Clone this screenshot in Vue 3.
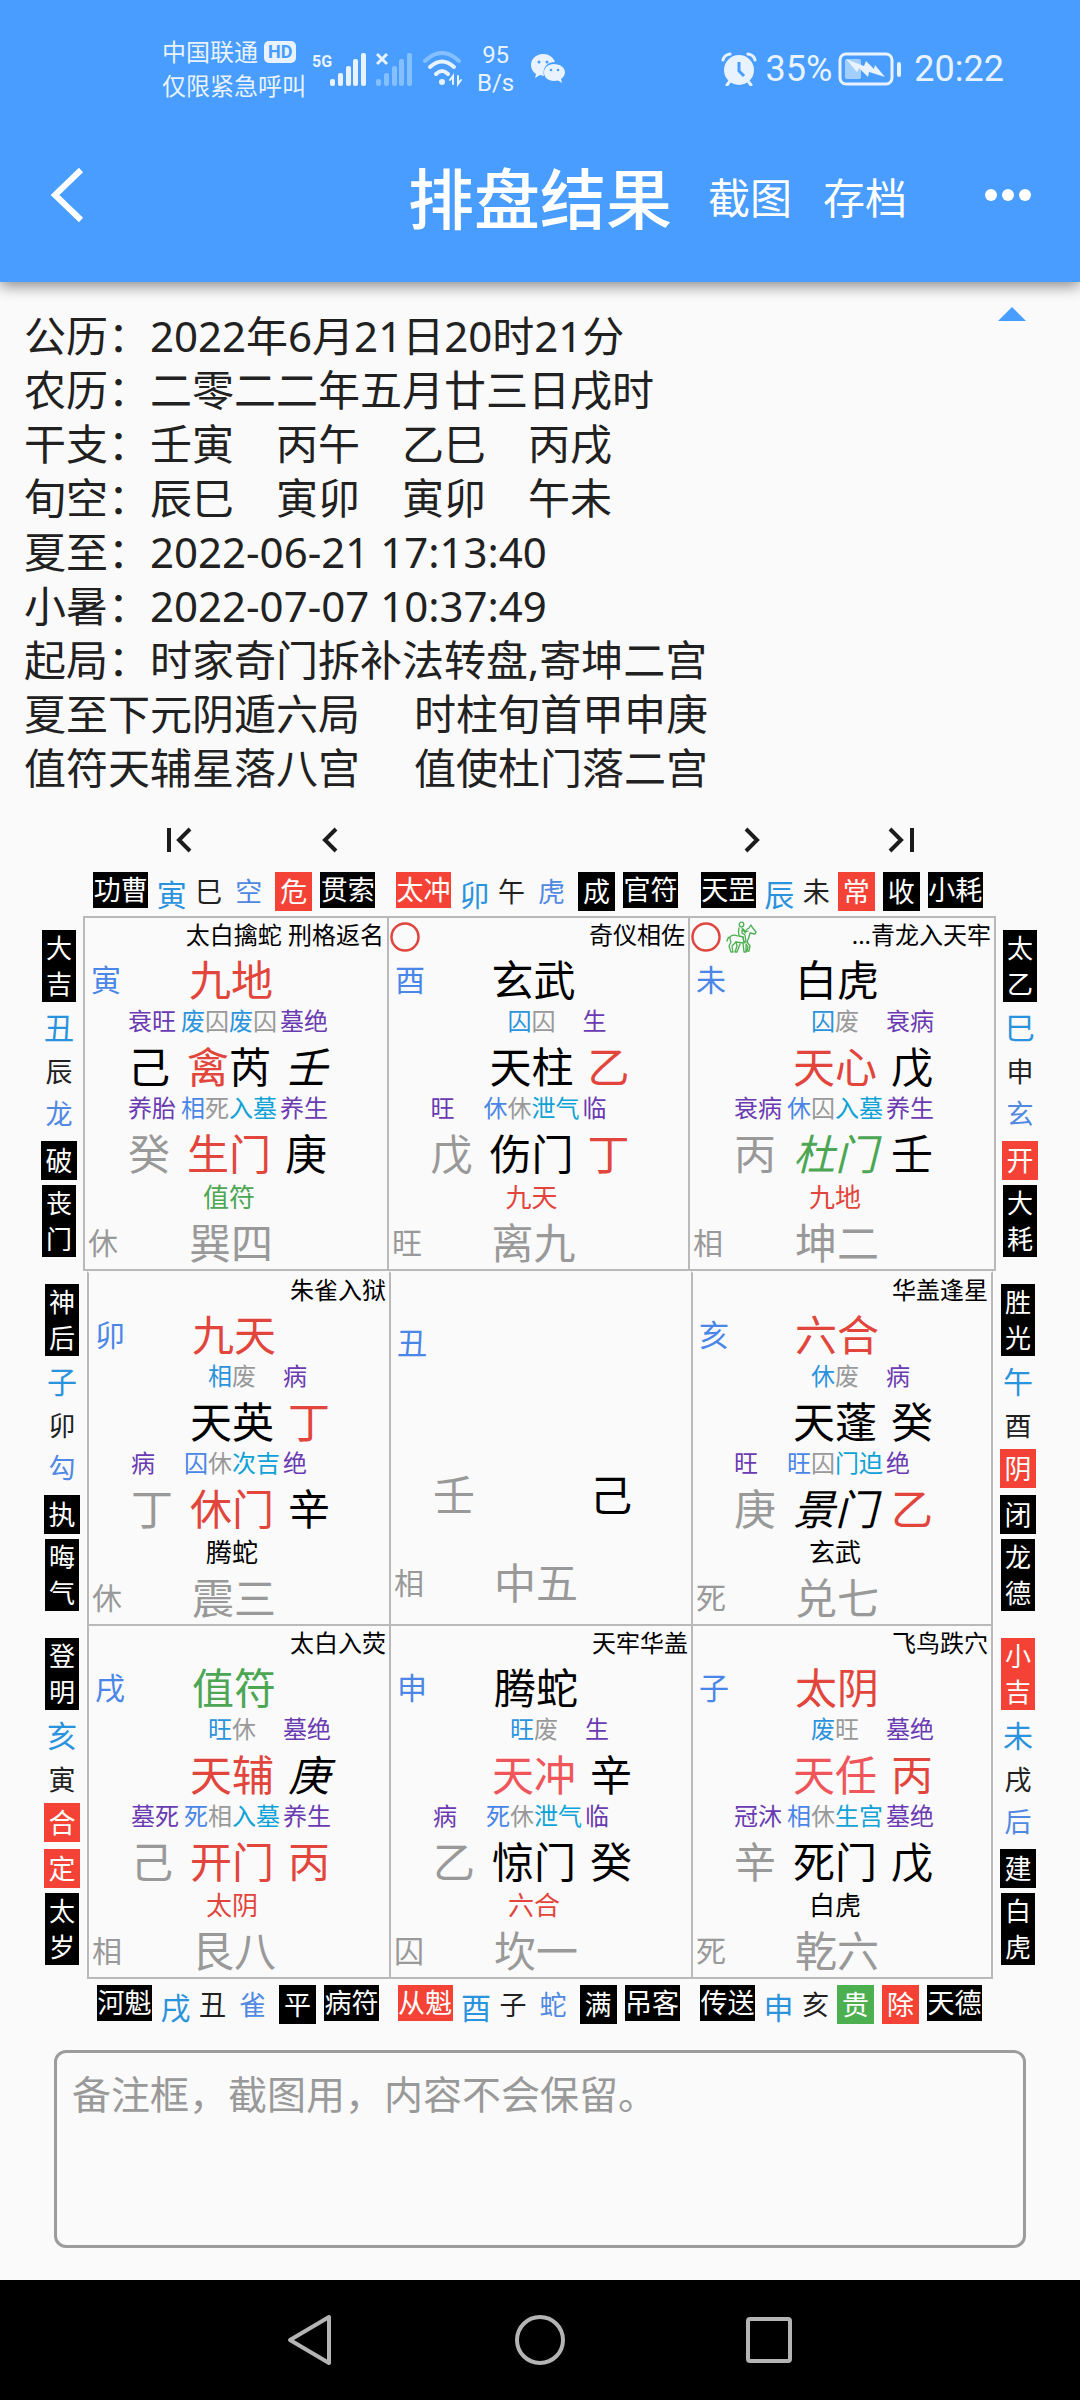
<script setup>
import { ref } from 'vue'

const note = ref('')

const infoLines = [
  ['公历：2022年6月21日20时21分'],
  ['农历：二零二二年五月廿三日戌时'],
  ['干支：壬寅　丙午　乙巳　丙戌'],
  ['旬空：辰巳　寅卯　寅卯　午未'],
  ['夏至：2022-06-21 17:13:40'],
  ['小暑：2022-07-07 10:37:49'],
  ['起局：时家奇门拆补法转盘,寄坤二宫'],
  ['夏至下元阴遁六局', '时柱旬首甲申庚'],
  ['值符天辅星落八宫', '值使杜门落二宫']
]

// Each strip: general, monthly branch, hour branch, spirit, officer, year star.
// A "|red", "|black" or "|green" suffix paints the item as a filled box.
const topStrips = [
  ['功曹|black', '寅', '巳', '空', '危|red', '贯索|black'],
  ['太冲|red', '卯', '午', '虎', '成|black', '官符|black'],
  ['天罡|black', '辰', '未', '常|red', '收|black', '小耗|black']
]
const bottomStrips = [
  ['河魁|black', '戌', '丑', '雀', '平|black', '病符|black'],
  ['从魁|red', '酉', '子', '蛇', '满|black', '吊客|black'],
  ['传送|black', '申', '亥', '贵|green', '除|red', '天德|black']
]

// Coloured runs are written "text|tone", separated by spaces.
const rows = [
  {
    left: ['大吉|black', '丑', '辰', '龙', '破|black', '丧门|black'],
    right: ['太乙|black', '巳', '申', '玄', '开|red', '大耗|black'],
    cells: [
      { tag: '太白擒蛇 刑格返名', branch: '寅', title: '九地|t-red', s1: ['衰旺', '废|t-sky 囚|t-grey 废|t-sky 囚|t-grey', '墓绝'], star: ['己|t-ink', '禽|t-red 芮|t-ink', '壬|t-ink slant'], s2: ['养胎', '相|t-blue 死|t-grey 入墓|t-cyan', '养生'], door: ['癸|t-grey', '生门|t-red', '庚|t-ink'], god: '值符|t-green', force: '休', palace: '巽四' },
      { empty: true, tag: '奇仪相佐', branch: '酉', title: '玄武|t-ink', s1: ['', '囚|t-sky 囚|t-grey', '生'], star: ['', '天柱|t-ink', '乙|t-red'], s2: ['旺', '休|t-blue 休|t-grey 泄气|t-cyan', '临'], door: ['戊|t-grey', '伤门|t-ink', '丁|t-red'], god: '九天|t-red', force: '旺', palace: '离九' },
      { empty: true, horse: true, tag: '...青龙入天牢', branch: '未', title: '白虎|t-ink', s1: ['', '囚|t-sky 废|t-grey', '衰病'], star: ['', '天心|t-red', '戊|t-ink'], s2: ['衰病', '休|t-blue 囚|t-grey 入墓|t-cyan', '养生'], door: ['丙|t-grey', '杜门|t-green slant', '壬|t-ink'], god: '九地|t-red', force: '相', palace: '坤二' }
    ]
  },
  {
    left: ['神后|black', '子', '卯', '勾', '执|black', '晦气|black'],
    right: ['胜光|black', '午', '酉', '阴|red', '闭|black', '龙德|black'],
    cells: [
      { tag: '朱雀入狱', branch: '卯', title: '九天|t-red', s1: ['', '相|t-sky 废|t-grey', '病'], star: ['', '天英|t-ink', '丁|t-red'], s2: ['病', '囚|t-blue 休|t-grey 次吉|t-cyan', '绝'], door: ['丁|t-grey', '休门|t-red', '辛|t-ink'], god: '腾蛇|t-ink', force: '休', palace: '震三' },
      { middle: true, tag: '', branch: '丑', title: '', door: ['壬|t-grey', '', '己|t-ink'], force: '相', palace: '中五' },
      { tag: '华盖逢星', branch: '亥', title: '六合|t-red', s1: ['', '休|t-sky 废|t-grey', '病'], star: ['', '天蓬|t-ink', '癸|t-ink'], s2: ['旺', '旺|t-blue 囚|t-grey 门迫|t-cyan', '绝'], door: ['庚|t-grey', '景门|t-ink slant', '乙|t-red'], god: '玄武|t-ink', force: '死', palace: '兑七' }
    ]
  },
  {
    left: ['登明|black', '亥', '寅', '合|red', '定|red', '太岁|black'],
    right: ['小吉|red', '未', '戌', '后', '建|black', '白虎|black'],
    cells: [
      { tag: '太白入荧', branch: '戌', title: '值符|t-green', s1: ['', '旺|t-sky 休|t-grey', '墓绝'], star: ['', '天辅|t-red', '庚|t-ink slant'], s2: ['墓死', '死|t-blue 相|t-grey 入墓|t-cyan', '养生'], door: ['己|t-grey', '开门|t-red', '丙|t-red'], god: '太阴|t-red', force: '相', palace: '艮八' },
      { tag: '天牢华盖', branch: '申', title: '腾蛇|t-ink', s1: ['', '旺|t-sky 废|t-grey', '生'], star: ['', '天冲|t-rose', '辛|t-ink'], s2: ['病', '死|t-blue 休|t-grey 泄气|t-cyan', '临'], door: ['乙|t-grey', '惊门|t-ink', '癸|t-ink'], god: '六合|t-red', force: '囚', palace: '坎一' },
      { tag: '飞鸟跌穴', branch: '子', title: '太阴|t-red', s1: ['', '废|t-sky 旺|t-grey', '墓绝'], star: ['', '天任|t-rose', '丙|t-red'], s2: ['冠沐', '相|t-blue 休|t-grey 生宫|t-cyan', '墓绝'], door: ['辛|t-grey', '死门|t-ink', '戊|t-ink'], god: '白虎|t-ink', force: '死', palace: '乾六' }
    ]
  }
]

const runs = (s) =>
  (s.match(/[^\s|]+\|t-[a-z]+( slant)?/g) || []).map((r) => {
    const [text, tone] = r.split('|')
    return { text, tone }
  })
const label = (s) => s.split('|')[0]
const fill = (s) => (s.includes('|') ? ['fill', 'fill-' + s.split('|')[1]] : [])
</script>

<template>
  <div class="screen">
    <header class="head">
      <div class="status">
        <div class="carrier">
          <span class="line">中国联通<b class="hd">HD</b></span>
          <span class="line">仅限紧急呼叫</span>
        </div>
        <svg class="signal" width="54" height="36" viewBox="0 0 54 36">
          <text x="0" y="16" class="gen">5G</text>
          <g fill="#e8f3ff"><rect x="18" y="28" width="5" height="7" rx="2" /><rect x="26" y="22" width="5" height="13" rx="2" /><rect x="34" y="15" width="5" height="20" rx="2" /><rect x="41" y="8" width="5" height="27" rx="2" /><rect x="49" y="2" width="5" height="33" rx="2" /></g>
        </svg>
        <svg class="signal2" width="36" height="36" viewBox="0 0 36 36">
          <g fill="#84bfff"><rect x="0" y="28" width="5" height="7" rx="2" /><rect x="8" y="22" width="5" height="13" rx="2" /><rect x="16" y="15" width="5" height="20" rx="2" /><rect x="23" y="8" width="5" height="27" rx="2" /><rect x="31" y="2" width="5" height="33" rx="2" /></g>
          <path d="M1 3l10 10M11 3L1 13" stroke="#e8f3ff" stroke-width="3" />
        </svg>
        <svg class="wifi" width="40" height="36" viewBox="0 0 40 36" fill="none" stroke-width="4" stroke-linecap="round">
          <path d="M2 10Q19-6 36 10" stroke="#84bfff" />
          <path d="M7 16Q19 5 31 16M13 23Q19 17 25 23" stroke="#e8f3ff" />
          <circle cx="19" cy="31" r="3" fill="#e8f3ff" />
          <path d="M30 33V25l-3 4M35 25v8l3-4" stroke="#e8f3ff" stroke-width="2" />
        </svg>
        <div class="rate"><span>95</span><span>B/s</span></div>
        <svg class="wechat" width="34" height="30" viewBox="0 0 34 30">
          <path d="M12 0C5 0 0 5 0 11c0 4 2 7 5 9l-1 4 5-3 4 1C11 14 16 8 24 8 22 3 18 0 12 0z" fill="#e8f3ff" />
          <path d="M23 10c-6 0-10 4-10 8.500s4 8.500 10 8.500l4-.5 4 2.500-1-4c2-1.500 4-4 4-6.500 0-5-5-8.500-11-8.500z" fill="#e8f3ff" />
          <g fill="#489dff"><circle cx="8" cy="8" r="1.500" /><circle cx="16" cy="8" r="1.500" /><circle cx="20" cy="16" r="1.300" /><circle cx="27" cy="16" r="1.300" /></g>
        </svg>
        <div class="system">
          <svg width="36" height="34" viewBox="0 0 36 34">
            <circle cx="18" cy="18" r="15" fill="#e8f3ff" />
            <path d="M2 8q1-5 7-6M34 8q-1-5-7-6M9 29l-3 4M27 29l3 4" stroke="#e8f3ff" stroke-width="3" fill="none" stroke-linecap="round" />
            <path d="M18 10v9l5 5" stroke="#489dff" stroke-width="3" fill="none" />
          </svg>
          <span class="pct">35%</span>
          <svg width="64" height="34" viewBox="0 0 64 34">
            <rect x="2" y="2" width="52" height="30" rx="6" fill="none" stroke="#e8f3ff" stroke-width="3" />
            <rect x="7" y="7" width="16" height="20" rx="2" fill="#a3cfff" />
            <path d="M8 7l18 7 2-5 8 8 1-4 10 12-16-5-1 5-9-9-2 4z" fill="#e8f3ff" />
            <rect x="59" y="10" width="4" height="15" rx="2" fill="#e8f3ff" />
          </svg>
          <span class="clock">20:22</span>
        </div>
      </div>
      <div class="appbar">
        <button class="icon-btn back" type="button" aria-label="返回">
          <svg width="36" height="56" viewBox="0 0 36 56"><path d="M32 3L6 28l26 25" fill="none" stroke="#fff" stroke-width="6" /></svg>
        </button>
        <h1>排盘结果</h1>
        <div class="actions">
          <button class="action" type="button">截图</button>
          <button class="action" type="button">存档</button>
          <button class="icon-btn more" type="button" aria-label="更多">
            <svg width="46" height="12" viewBox="0 0 46 12" fill="#fff"><circle cx="6" cy="6" r="6" /><circle cx="23" cy="6" r="6" /><circle cx="40" cy="6" r="6" /></svg>
          </button>
        </div>
      </div>
    </header>

    <main>
      <section class="info">
        <div class="lines">
          <p v-for="(l, i) in infoLines" :key="i"><span v-for="part in l" :key="part">{{ part }}</span></p>
        </div>
        <button class="icon-btn fold" type="button" aria-label="收起">
          <svg width="28" height="14" viewBox="0 0 28 14"><path d="M14 0l14 14H0z" fill="#489dff" /></svg>
        </button>
      </section>

      <nav class="steps">
        <div class="pair">
          <button class="icon-btn" type="button" aria-label="最前"><svg width="32" height="32" viewBox="0 0 32 32"><path d="M5 4v24M26 5L15 16l11 11" /></svg></button>
          <button class="icon-btn" type="button" aria-label="上一个"><svg width="32" height="32" viewBox="0 0 32 32"><path d="M22 5L11 16l11 11" /></svg></button>
        </div>
        <div class="pair">
          <button class="icon-btn" type="button" aria-label="下一个"><svg width="32" height="32" viewBox="0 0 32 32"><path d="M10 5l11 11-11 11" /></svg></button>
          <button class="icon-btn" type="button" aria-label="最后"><svg width="32" height="32" viewBox="0 0 32 32"><path d="M4 5l11 11L4 27M26 4v24" /></svg></button>
        </div>
      </nav>

      <section class="board">
        <div class="strips">
          <div v-for="(s, i) in topStrips" :key="i" class="strip">
            <span v-for="(x, k) in s" :key="k" :class="['slot', 'k' + k, ...fill(x)]">{{ label(x) }}</span>
          </div>
        </div>

        <div v-for="(row, r) in rows" :key="r" :class="['row', 'row' + r]">
          <div class="side">
            <span v-for="(x, k) in row.left" :key="k" :class="['slot', 'k' + k, ...fill(x)]">{{ label(x) }}</span>
          </div>
          <div class="cells">
            <article v-for="(c, i) in row.cells" :key="i" class="cell">
              <div class="tags">
                <svg v-if="c.empty" width="30" height="30" viewBox="0 0 30 30"><circle cx="15" cy="15" r="13.500" fill="none" stroke="#df463f" stroke-width="2.500" /></svg>
                <svg v-if="c.horse" class="horse" width="32" height="32" viewBox="0 0 32 32" fill="none" stroke="#4caf50" stroke-width="1.300" stroke-linejoin="round" stroke-linecap="round">
                  <circle cx="16.500" cy="3.500" r="2.300" />
                  <path d="M14 7q-1 4 0 8l4 1 1 5 2 0-1-7-3-2v-3l3 2 3-1M17 7l3 3" />
                  <path d="M13 15q-6-2-8 1-2 0-3 4M5 16q0 4 1 5l-2 4 2 6h2l-1-6 4-4 7 1 1 9h2l0-8 2 3-1 4h2l1-5-3-4q2-4 3-9l5 1 1-2-4-5-1-2-2 3q-3 1-4 5" />
                  <path d="M11 21l1 4-2 6h2l3-8M18 16l1 6" />
                </svg>
                <span class="tag">{{ c.tag }}</span>
              </div>
              <div :class="['body', { middle: c.middle }]">
                <span class="branch">{{ c.branch }}</span>
                <span class="big mid wide"><i v-for="t in runs(c.title)" :key="t.text" :class="t.tone">{{ t.text }}</i></span>
                <template v-if="!c.middle">
                  <span class="small l">{{ c.s1[0] }}</span>
                  <span class="small mid"><i v-for="(t, n) in runs(c.s1[1])" :key="n" :class="t.tone">{{ t.text }}</i></span>
                  <span class="small r">{{ c.s1[2] }}</span>
                  <span class="big l"><i v-for="t in runs(c.star[0])" :key="t.text" :class="t.tone">{{ t.text }}</i></span>
                  <span class="big mid"><i v-for="t in runs(c.star[1])" :key="t.text" :class="t.tone">{{ t.text }}</i></span>
                  <span class="big r"><i v-for="t in runs(c.star[2])" :key="t.text" :class="t.tone">{{ t.text }}</i></span>
                  <span class="small l">{{ c.s2[0] }}</span>
                  <span class="small mid"><i v-for="(t, n) in runs(c.s2[1])" :key="n" :class="t.tone">{{ t.text }}</i></span>
                  <span class="small r">{{ c.s2[2] }}</span>
                </template>
                <span class="big door l"><i v-for="t in runs(c.door[0])" :key="t.text" :class="t.tone">{{ t.text }}</i></span>
                <span class="big door mid"><i v-for="t in runs(c.door[1])" :key="t.text" :class="t.tone">{{ t.text }}</i></span>
                <span class="big door r"><i v-for="t in runs(c.door[2])" :key="t.text" :class="t.tone">{{ t.text }}</i></span>
                <span v-if="c.god" class="small god mid"><i v-for="t in runs(c.god)" :key="t.text" :class="t.tone">{{ t.text }}</i></span>
                <span class="force">{{ c.force }}</span>
                <span class="big palace mid wide">{{ c.palace }}</span>
              </div>
            </article>
          </div>
          <div class="side">
            <span v-for="(x, k) in row.right" :key="k" :class="['slot', 'k' + k, ...fill(x)]">{{ label(x) }}</span>
          </div>
        </div>

        <div class="strips under">
          <div v-for="(s, i) in bottomStrips" :key="i" class="strip">
            <span v-for="(x, k) in s" :key="k" :class="['slot', 'k' + k, ...fill(x)]">{{ label(x) }}</span>
          </div>
        </div>
      </section>

      <div class="note">
        <textarea v-model="note" aria-label="备注" placeholder="备注框，截图用，内容不会保留。"></textarea>
      </div>
    </main>

    <footer class="sysnav">
      <button class="icon-btn" type="button" aria-label="后退"><svg width="52" height="52" viewBox="0 0 52 52"><path d="M44 3v46L5 26z" stroke-linejoin="round" /></svg></button>
      <button class="icon-btn" type="button" aria-label="主屏幕"><svg width="52" height="52" viewBox="0 0 52 52"><circle cx="26" cy="26" r="23" /></svg></button>
      <button class="icon-btn" type="button" aria-label="最近任务"><svg width="52" height="52" viewBox="0 0 52 52"><rect x="5" y="5" width="42" height="42" rx="2" /></svg></button>
    </footer>
  </div>
</template>

<style>
body {
  background: #fafafa;
}
</style>

<style scoped>
.screen {
  min-height: 100vh;
  display: flex;
  flex-direction: column;
  background: #fafafa;
  color: #212121;
  font-family: "Noto Sans", "Noto Sans CJK SC", sans-serif;
}
main {
  flex: 1;
}
button {
  border: 0;
  padding: 0;
  background: none;
  color: inherit;
  font-family: inherit;
}
.icon-btn {
  display: flex;
  align-items: center;
  justify-content: center;
}
svg {
  display: block;
  flex: none;
}
i {
  font-style: normal;
}

/* header */
.head {
  background: #489dff;
  color: #fff;
  box-shadow: 0 4px 14px rgba(0, 0, 0, 0.45);
}
.status {
  display: flex;
  align-items: center;
  height: 94px;
  padding: 22px 76px 0 162px;
  color: #e8f3ff;
}
.carrier {
  display: flex;
  flex-direction: column;
  width: 150px;
  font-size: 24px;
  line-height: 34px;
  white-space: nowrap;
}
.line {
  display: flex;
  align-items: center;
}
.hd {
  margin-left: 6px;
  padding: 0 4px;
  border-radius: 5px;
  background: #e8f3ff;
  color: #489dff;
  font: 700 18px/22px Roboto, sans-serif;
}
.gen {
  font: 700 16px Roboto, sans-serif;
  fill: #e8f3ff;
}
.signal2 {
  margin-left: 10px;
}
.wifi {
  margin-left: 11px;
}
.rate {
  display: flex;
  flex-direction: column;
  align-items: center;
  margin-left: 14px;
  font: 24px/28px Roboto, sans-serif;
}
.wechat {
  margin-left: 17px;
}
.system {
  display: flex;
  align-items: center;
  margin-left: auto;
  font: 36px/44px Roboto, sans-serif;
}
.pct {
  margin: 0 6px 0 9px;
}
.clock {
  margin-left: 12px;
}
.appbar {
  display: grid;
  grid-template-columns: 1fr auto 1fr;
  align-items: center;
  height: 166px;
  padding: 0 49px 2px;
  box-sizing: border-box;
}
.back {
  justify-self: start;
  margin-bottom: 6px;
}
h1 {
  margin: 0;
  font-size: 66px;
  font-weight: 500;
  line-height: 80px;
}
.actions {
  display: flex;
  align-items: center;
  gap: 31px;
  padding-left: 36px;
}
.action {
  font-size: 42px;
  line-height: 56px;
}
.more {
  margin: 0 0 6px auto;
}

/* date summary */
.info {
  display: flex;
  justify-content: space-between;
  align-items: flex-start;
  padding: 25px 54px 0 24px;
}
.lines {
  padding-top: 3px;
}
.lines p {
  display: flex;
  gap: 54px;
  height: 54px;
  margin: 0;
  font-size: 42px;
  line-height: 52px;
  white-space: nowrap;
}
.steps {
  display: flex;
  justify-content: space-between;
  margin-top: 20px;
  padding: 0 162px 0 164px;
}
.pair {
  display: flex;
  gap: 118px;
}
.steps .icon-btn {
  height: 48px;
}
.steps path {
  fill: none;
  stroke: #1c1c1c;
  stroke-width: 4;
}

/* chart frame */
.board {
  margin-top: 8px;
}
.strips {
  display: grid;
  grid-template-columns: 304fr 301fr 308fr;
  padding: 0 84px 0 82px;
  margin-bottom: 5px;
}
.strips.under {
  padding: 0 86px 0 87px;
  margin: 6px 0 0;
}
.strip {
  display: grid;
  grid-template-columns: 55px 31px 27px 37px 37px 55px;
  column-gap: 8px;
  justify-content: center;
  align-items: start;
  height: 39px;
}
.slot {
  display: block;
  text-align: center;
  font-size: 27px;
  line-height: 40px;
  white-space: nowrap;
}
.slot.k1 {
  font-size: 30px;
  color: #2a93dd;
}
.slot.k2 {
  color: #212121;
}
.slot.k3 {
  color: #5088e2;
}
.strip .k1 {
  line-height: 46px;
}
.slot.fill {
  color: #fff;
}
.fill-black {
  background: #000;
}
.fill-red {
  background: #f44336;
}
.fill-green {
  background: #4caf50;
}
.strip .k0,
.strip .k5 {
  font-size: 27px;
  line-height: 36px;
}
.strip .k3.fill,
.strip .k4.fill {
  line-height: 39px;
}
.row {
  display: flex;
  align-items: center;
  gap: 7px;
  padding: 0 44px;
}
.row0 {
  gap: 6px;
  padding: 0 42px 0 41px;
}
.cells {
  flex: 1;
  display: grid;
  grid-template-columns: repeat(3, 1fr);
}
.row0 .cells {
  grid-template-columns: 304fr 301fr 308fr;
}
.side {
  display: grid;
  grid-template-rows: 72px 52px 36px 48px 44px 75px;
  align-items: center;
  justify-items: center;
  width: 36px;
}
.side .k0,
.side .k5 {
  width: 34px;
  padding: 0 4px;
  box-sizing: border-box;
  font-size: 26px;
  line-height: 36px;
  white-space: normal;
}
.side .k5 {
  align-self: end;
}
.side .k3.fill,
.side .k4.fill {
  width: 36px;
  line-height: 39px;
}

/* palace */
.cell {
  border: 0 solid #b9b9b9;
  border-width: 2px 0 2px 2px;
  color: #000;
}
.cell:last-child {
  border-right-width: 2px;
}
.row1 .cell {
  border-top-color: transparent;
  border-bottom-width: 0;
}
.tags {
  display: flex;
  align-items: center;
  gap: 4px;
  height: 38px;
  padding: 0 3px 0 1px;
  box-sizing: border-box;
}
.tag {
  margin: -4px 0 0 auto;
  font-size: 24px;
  line-height: 32px;
  white-space: nowrap;
}
.body {
  display: grid;
  grid-template-columns: 1fr 50px 96px 50px 1fr;
  column-gap: 3px;
  padding-right: 14px;
}
.branch,
.force {
  grid-column: 1;
  padding-left: 6px;
  font-size: 30px;
  line-height: 48px;
  white-space: nowrap;
  color: #4a86e8;
}
.force {
  padding-left: 3px;
  line-height: 52px;
  color: #999;
}
.big {
  font-size: 42px;
  line-height: 48px;
  white-space: nowrap;
}
.small {
  margin: 4px 0 9px;
  font-size: 24px;
  line-height: 26px;
  color: #6a3ab2;
  white-space: nowrap;
}
.l {
  grid-column: 2;
}
.mid {
  grid-column: 3;
  text-align: center;
}
.big.mid {
  margin: 0 -6px;
}
.wide {
  padding-left: 4px;
}
.r {
  grid-column: 4;
}
.big.r {
  padding-right: 3px;
  text-align: right;
}
.small.god {
  margin: 6px 0 7px;
  font-size: 26px;
}
.palace {
  line-height: 52px;
  color: #999;
}
.middle {
  padding-top: 8px;
}
.middle .door {
  margin-top: 104px;
}
.middle .force,
.middle .palace {
  margin-top: 38px;
}
.t-red {
  color: #e2453b;
}
.t-rose {
  color: #f0555a;
}
.t-green {
  color: #4ca654;
}
.t-grey {
  color: #999;
}
.t-ink {
  color: #000;
}
.t-sky {
  color: #2a93dd;
}
.t-blue {
  color: #4a86e8;
}
.t-cyan {
  color: #0fa2d6;
}
.slant {
  font-style: italic;
}

/* note */
.note {
  padding: 26px 54px 32px;
}
textarea {
  display: block;
  width: 100%;
  height: 198px;
  padding: 12px 15px;
  box-sizing: border-box;
  border: 3px solid #9c9c9c;
  border-radius: 12px;
  background: transparent;
  color: #212121;
  font: 39px/54px "Noto Sans CJK SC", sans-serif;
  resize: none;
}
textarea::placeholder {
  color: #999;
}

/* system navigation */
.sysnav {
  display: flex;
  align-items: center;
  justify-content: center;
  gap: 177px;
  height: 120px;
  background: #000;
}
.sysnav svg {
  fill: none;
  stroke: #b4b4b4;
  stroke-width: 4;
}
</style>
